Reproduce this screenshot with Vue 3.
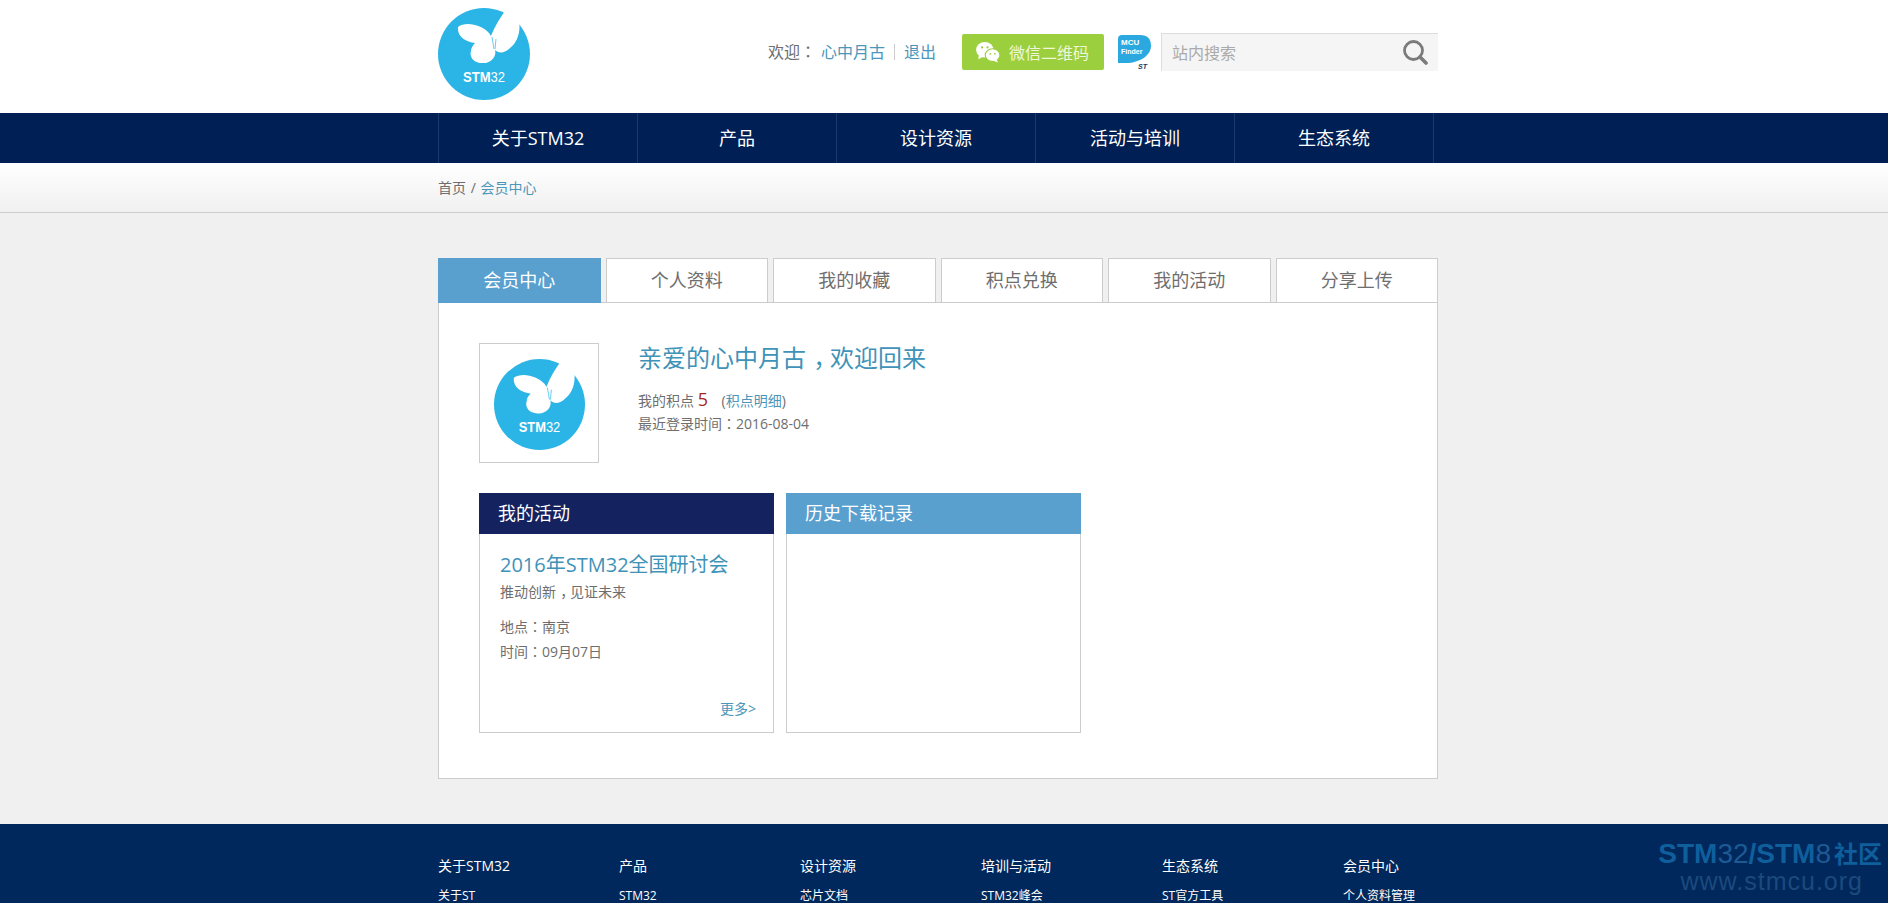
<script setup>
const navItems = ['关于STM32', '产品', '设计资源', '活动与培训', '生态系统']
const tabs = ['会员中心', '个人资料', '我的收藏', '积点兑换', '我的活动', '分享上传']
const butterfly = 'M20 19C28 13 44 17 51 25L53 28C57 18 62 10 67 3L81 13C83 24 79 35 72 40C67 45 61 46 57 42C59 49 52 56 44 55C36 55 31 49 33 43C33 40 35 37 37 35C28 34 19 29 20 19Z'
const footerCols = [
  ['关于STM32', '关于ST'],
  ['产品', 'STM32'],
  ['设计资源', '芯片文档'],
  ['培训与活动', 'STM32峰会'],
  ['生态系统', 'ST官方工具'],
  ['会员中心', '个人资料管理'],
]
</script>

<template>
  <div class="page">
    <header class="header wrap">
      <svg class="logo" viewBox="0 0 92 92">
        <circle cx="46" cy="46" r="46" fill="#2bb5e6" />
        <path :d="butterfly" fill="#fff" />
        <path d="M54 29L56 41M58 31L57 41" stroke="#2bb5e6" stroke-width="0.7" />
        <text x="25" y="74" textLength="42" lengthAdjust="spacingAndGlyphs" class="logo-text"><tspan font-weight="700">STM</tspan>32</text>
      </svg>
      <div class="user">
        <span class="welcome">欢迎<span class="colon">：</span></span>
        <a class="link">心中月古</a>
        <i class="sep"></i>
        <a class="link">退出</a>
      </div>
      <a class="wechat">
        <svg class="wechat-icon" viewBox="0 0 28 24">
          <ellipse cx="10.500" cy="9.500" rx="9.500" ry="8.500" fill="#fff" />
          <path d="M4 15L3.500 20L9 17Z" fill="#fff" />
          <ellipse cx="19" cy="15.500" rx="8" ry="7" fill="#fff" stroke="#9ccf3e" stroke-width="1.200" />
          <path d="M23 20L25 23.500L20 21.500Z" fill="#fff" />
          <circle cx="7.500" cy="7" r="1.200" fill="#9ccf3e" />
          <circle cx="13.500" cy="7" r="1.200" fill="#9ccf3e" />
          <circle cx="16.500" cy="14" r="1" fill="#9ccf3e" />
          <circle cx="21.500" cy="14" r="1" fill="#9ccf3e" />
        </svg>
        微信二维码
      </a>
      <svg class="finder" viewBox="0 0 33 36">
        <path d="M0 4Q0 0 4 0H22Q33 0 33 11C33 20 22 28 8 28H0Z" fill="#2ba8e0" />
        <text x="3" y="10" class="finder-text">MCU</text>
        <text x="3" y="19" class="finder-text small">Finder</text>
        <text x="20" y="34" class="finder-st">ST</text>
      </svg>
      <div class="search">
        <span>站内搜索</span>
        <svg class="search-icon" viewBox="0 0 26 26">
          <circle cx="11.500" cy="11.500" r="9" fill="none" stroke="#7b7b7b" stroke-width="2.800" />
          <path d="M18 18L24 24" stroke="#7b7b7b" stroke-width="3.600" stroke-linecap="round" />
        </svg>
      </div>
    </header>

    <nav class="nav">
      <div class="wrap nav-row">
        <a v-for="item in navItems" :key="item" class="nav-item">{{ item }}</a>
      </div>
    </nav>

    <div class="crumb">
      <div class="wrap">
        首页 <span class="slash">/</span> <a class="link">会员中心</a>
      </div>
    </div>

    <main class="wrap main">
      <div class="tabs">
        <a v-for="(tab, i) in tabs" :key="tab" class="tab" :class="{ active: i === 0 }">{{ tab }}</a>
      </div>
      <section class="panel">
        <div class="profile">
          <div class="avatar">
            <svg class="avatar-logo" viewBox="0 0 92 92">
              <circle cx="46" cy="46" r="46" fill="#2bb5e6" />
              <path :d="butterfly" fill="#fff" />
              <path d="M54 29L56 41M58 31L57 41" stroke="#2bb5e6" stroke-width="0.7" />
              <text x="25" y="74" textLength="42" lengthAdjust="spacingAndGlyphs" class="logo-text"><tspan font-weight="700">STM</tspan>32</text>
            </svg>
          </div>
          <div class="profile-info">
            <h2 class="hello">亲爱的心中月古<span class="comma">，</span>欢迎回来</h2>
            <p class="points">我的积点 <span class="num">5</span> <span class="detail">(<a class="link">积点明细</a>)</span></p>
            <p class="last">最近登录时间<span class="colon">：</span>2016-08-04</p>
          </div>
        </div>
        <div class="cards">
          <div class="card">
            <h3 class="card-head dark">我的活动</h3>
            <div class="card-body">
              <h4 class="event">2016年STM32全国研讨会</h4>
              <p class="slogan">推动创新<span class="comma">，</span>见证未来</p>
              <p class="meta">地点<span class="colon">：</span>南京</p>
              <p class="meta">时间<span class="colon">：</span>09月07日</p>
              <a class="more link">更多&gt;</a>
            </div>
          </div>
          <div class="card">
            <h3 class="card-head light">历史下载记录</h3>
          </div>
        </div>
      </section>
    </main>

    <footer class="footer">
      <div class="wrap footer-row">
        <ul v-for="col in footerCols" :key="col[0]" class="footer-col">
          <li v-for="text in col" :key="text">{{ text }}</li>
        </ul>
      </div>
      <div class="mark">
        <div class="mark-top"><b>STM</b>32<b>/STM</b>8<b class="mark-cn">社区</b></div>
        <div class="mark-url">www.stmcu.org</div>
      </div>
    </footer>
  </div>
</template>

<style>
html, body {
  margin: 0;
  background: #f0f0f0;
}
</style>

<style scoped>
* { box-sizing: border-box; }

.page {
  height: 903px;
  overflow: hidden;
  background: #f0f0f0;
  font-family: "Open Sans", "Noto Sans CJK SC", sans-serif;
  font-size: 14px;
  color: #6e6e6e;
}
.wrap {
  width: 1000px;
  margin: 0 auto;
  position: relative;
  left: -6px;
}
p, h2, h3, h4, ul { margin: 0; padding: 0; font-weight: 400; }
.link { color: #4b96ba; }
.colon { font-family: "Noto Sans CJK JP", sans-serif; }
.comma {
  display: inline-block;
  width: 1em;
  text-indent: 0.3em;
}

/* header */
.header {
  height: 113px;
  padding-bottom: 10px;
  display: flex;
  align-items: center;
}
.header::before {
  content: "";
  position: absolute;
  top: 0;
  bottom: 0;
  left: -500px;
  right: -500px;
  background: #fff;
  z-index: 0;
}
.header > * { position: relative; }
.logo { width: 92px; height: 92px; margin-top: 5px; }
.logo-text {
  font-family: "Liberation Sans", sans-serif;
  font-size: 15px;
  fill: #fff;
}
.user {
  margin-left: 238px;
  display: flex;
  align-items: center;
  font-size: 16px;
  line-height: 20px;
}
.welcome { margin-right: 5px; }
.sep {
  width: 1px;
  height: 16px;
  margin: 0 9px;
  background: #ccc;
}
.wechat {
  margin-left: 26px;
  width: 142px;
  height: 36px;
  display: flex;
  align-items: center;
  padding-left: 13px;
  gap: 8px;
  background: #9ccf3e;
  border-radius: 2px;
  color: #eef7da;
  font-size: 16px;
}
.wechat-icon { width: 26px; height: 22px; }
.finder {
  margin-left: 14px;
  width: 33px;
  height: 36px;
  margin-top: 3px;
}
.finder-text {
  font-family: "Liberation Sans", sans-serif;
  font-size: 8px;
  font-weight: 700;
  fill: #fff;
}
.finder-text.small { font-size: 7px; }
.finder-st {
  font-family: "Liberation Sans", sans-serif;
  font-size: 7px;
  font-weight: 700;
  font-style: italic;
  fill: #17385c;
}
.search {
  margin-left: 10px;
  width: 277px;
  height: 38px;
  display: flex;
  align-items: center;
  justify-content: space-between;
  padding: 0 10px;
  background: #f5f5f5;
  border-top: 1px solid #ddd;
  border-left: 1px solid #ddd;
  color: #aaa;
  font-size: 16px;
}
.search-icon { width: 26px; height: 26px; }

/* nav */
.nav { height: 50px; background: #002055; }
.nav-row {
  display: flex;
  height: 50px;
  border-left: 1px solid #1b3a6c;
}
.nav-item {
  width: 199px;
  border-right: 1px solid #1b3a6c;
  text-align: center;
  line-height: 50px;
  font-size: 18px;
  color: #fff;
}

/* breadcrumb */
.crumb {
  height: 50px;
  line-height: 49px;
  border-bottom: 1px solid #ccc;
  background: linear-gradient(#fff, #f0f0f0);
}
.slash { margin: 0 1px; }

/* tabs and panel */
.main { padding-top: 45px; }
.tabs {
  display: flex;
  gap: 5px;
  height: 45px;
}
.tab {
  flex: 1;
  background: #fff;
  border: 1px solid #ccc;
  text-align: center;
  line-height: 43px;
  font-size: 18px;
}
.tab.active {
  background: #5aa0cf;
  border-color: #5aa0cf;
  color: #fff;
}
.panel {
  height: 477px;
  margin-top: -1px;
  padding: 40px;
  background: #fff;
  border: 1px solid #ccc;
}
.profile { display: flex; }
.avatar {
  width: 120px;
  height: 120px;
  border: 1px solid #ccc;
  display: flex;
  align-items: center;
  justify-content: center;
}
.avatar-logo { width: 91px; height: 91px; margin-top: 3px; }
.profile-info { margin-left: 39px; }
.hello {
  font-size: 24px;
  line-height: 32px;
  margin-top: -1px;
  color: #3f92b8;
}
.points {
  margin-top: 12px;
  line-height: 26px;
  height: 26px;
}
.num { font-size: 18px; color: #a5261c; margin: 0 4px 0 0; }
.detail { margin-left: 6px; }
.last { line-height: 22px; }

/* cards */
.cards {
  display: flex;
  gap: 12px;
  margin-top: 30px;
}
.card {
  width: 295px;
  height: 240px;
  border: 1px solid #ccc;
  border-top: 0;
  background: #fff;
}
.card-head {
  height: 41px;
  margin: 0 -1px;
  padding-left: 19px;
  line-height: 40px;
  font-size: 18px;
  color: #fff;
}
.card-head.dark { background: #14235f; }
.card-head.light { background: #5aa0cf; }
.card-body {
  position: relative;
  height: 198px;
  padding: 16px 20px;
}
.event {
  font-size: 20px;
  line-height: 30px;
  color: #3f92b8;
}
.slogan { margin-top: 2px; line-height: 20px; margin-bottom: 12px; }
.meta { line-height: 25px; }
.more {
  position: absolute;
  right: 17px;
  bottom: 13px;
  line-height: 20px;
}

/* footer */
.footer {
  position: relative;
  height: 79px;
  margin-top: 45px;
  background: #00285c;
  overflow: hidden;
}
.footer-row { display: flex; padding-top: 32px; }
.footer-col {
  flex: 0 0 181px;
  list-style: none;
  color: #fff;
  font-size: 12px;
}
.footer-col li { line-height: 20px; margin-bottom: 10px; }
.footer-col li:first-child { font-size: 14px; }
.mark {
  position: absolute;
  right: 6px;
  top: 14px;
  color: #0f5f9c;
  font-family: "Liberation Sans", sans-serif;
  text-align: right;
}
.mark-top { font-size: 28px; line-height: 30px; white-space: nowrap; color: #1d5a94; }
.mark-top b { color: #0f5f9c; }
.mark-top b.mark-cn { font-family: "Noto Sans CJK SC", sans-serif; font-size: 24px; margin-left: 3px; }
.mark-url {
  font-size: 25px;
  line-height: 24px;
  letter-spacing: 1px;
  padding-right: 19px;
  color: #1c4a7c;
}
</style>
